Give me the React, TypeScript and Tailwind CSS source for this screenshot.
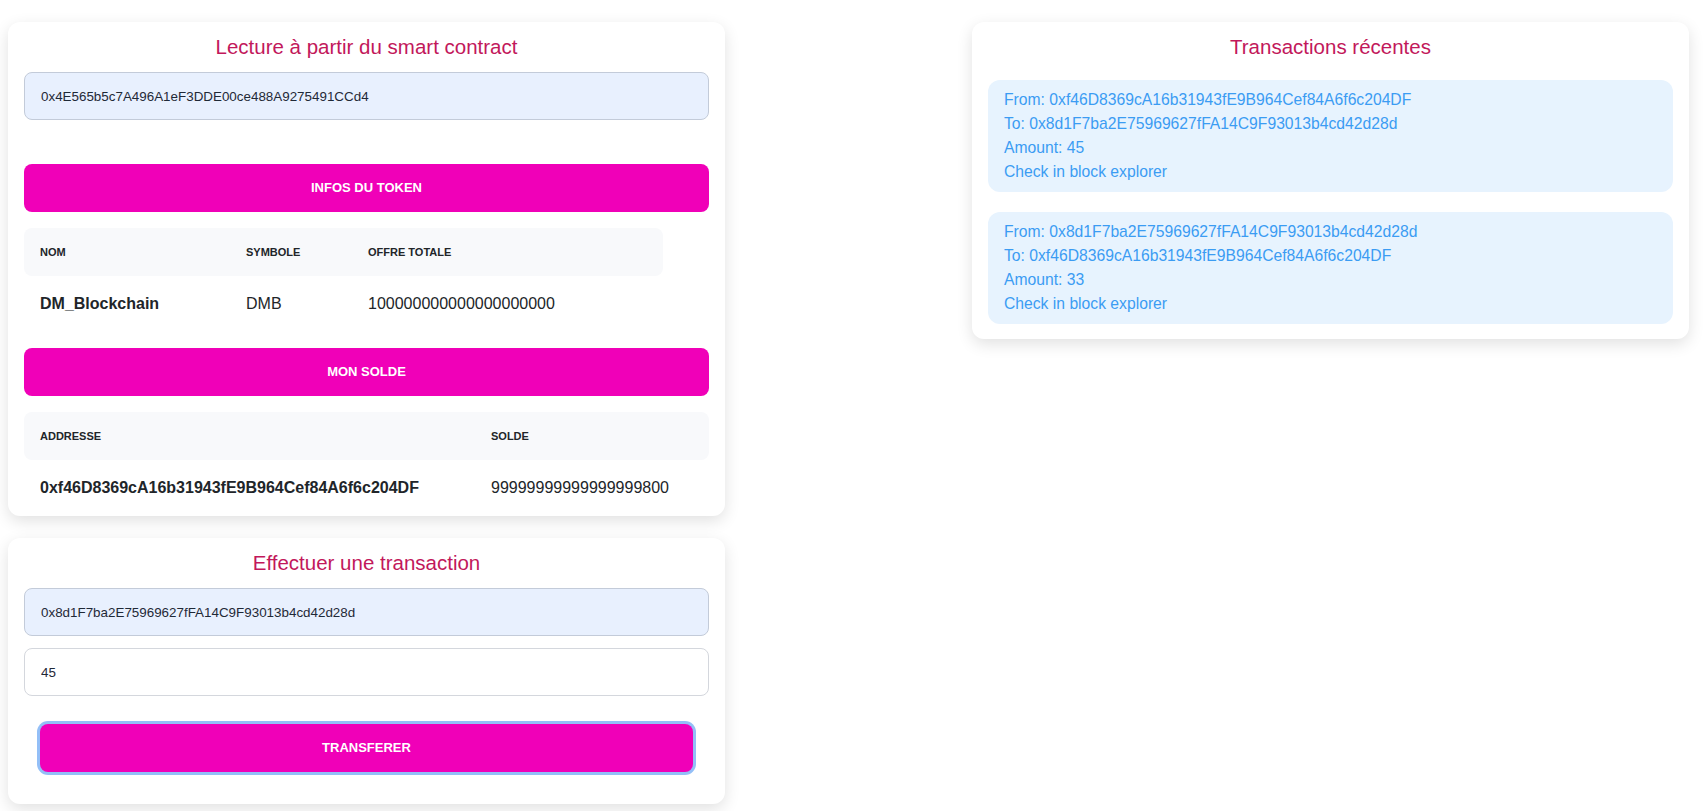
import { useState } from "react";

interface Transaction {
  from: string;
  to: string;
  amount: number;
}

const ADDR_CONTRACT = "0x4E565b5c7A496A1eF3DDE00ce488A9275491CCd4";
const ADDR_ME = "0xf46D8369cA16b31943fE9B964Cef84A6f6c204DF";
const ADDR_OTHER = "0x8d1F7ba2E75969627fFA14C9F93013b4cd42d28d";

const transactions: Transaction[] = [
  { from: ADDR_ME, to: ADDR_OTHER, amount: 45 },
  { from: ADDR_OTHER, to: ADDR_ME, amount: 33 },
];

const Title = ({ children }: { children: string }) => (
  <h2 className="text-center text-[20.5px] leading-[28px] text-[#c2185b] mb-[11px]">{children}</h2>
);

const PinkButton = ({ label, ring }: { label: string; ring?: boolean }) => (
  <button
    className={
      ring
        ? "w-full h-[48px] rounded-lg bg-[#f000b8] text-white text-[13px] font-bold uppercase ring-[3px] ring-[#93bff7]"
        : "w-full h-[48px] rounded-lg bg-[#f000b8] text-white text-[13px] font-bold uppercase"
    }
  >
    {label}
  </button>
);

const App = () => {
  const [contract, setContract] = useState(ADDR_CONTRACT);
  const [recipient, setRecipient] = useState(ADDR_OTHER);
  const [amount, setAmount] = useState("45");

  return (
    <div className="min-h-screen bg-white font-['Liberation_Sans',Arial,sans-serif] text-[#212529] flex justify-between items-start pl-[8px] pr-[19px] pt-[22px]">
      {/* colonne gauche */}
      <div className="w-[717px] flex flex-col gap-[22px]">
        <div className="bg-white rounded-xl shadow-[0_5px_16px_rgba(0,0,0,0.12)] px-4 pt-[11px]">
          <Title>Lecture à partir du smart contract</Title>
          <input
            value={contract}
            onChange={(e) => setContract(e.target.value)}
            className="w-full h-[48px] rounded-lg border border-[#c3cbd9] bg-[#e8f0fe] px-4 text-[13.4px] text-[#1f2937] outline-none"
          />
          <div className="mt-[44px]">
            <PinkButton label="Infos du token" />
          </div>
          <table className="mt-4 w-[639px] table-fixed text-left">
            <thead>
              <tr className="h-[48px] text-[11px] font-bold uppercase">
                <th className="w-[206px] bg-[#f8f9fb] rounded-l-lg pl-4">Nom</th>
                <th className="w-[122px] bg-[#f8f9fb] pl-4">Symbole</th>
                <th className="bg-[#f8f9fb] rounded-r-lg pl-4">Offre totale</th>
              </tr>
            </thead>
            <tbody>
              <tr className="h-[56px] text-[16px]">
                <td className="pl-4 font-bold">DM_Blockchain</td>
                <td className="pl-4">DMB</td>
                <td className="pl-4">100000000000000000000</td>
              </tr>
            </tbody>
          </table>
          <div className="mt-4">
            <PinkButton label="Mon solde" />
          </div>
          <table className="mt-4 w-full table-fixed text-left">
            <thead>
              <tr className="h-[48px] text-[11px] font-bold uppercase">
                <th className="w-[451px] bg-[#f8f9fb] rounded-l-lg pl-4">Addresse</th>
                <th className="bg-[#f8f9fb] rounded-r-lg pl-4">Solde</th>
              </tr>
            </thead>
            <tbody>
              <tr className="h-[56px] text-[16px]">
                <td className="pl-4 font-bold">{ADDR_ME}</td>
                <td className="pl-4">99999999999999999800</td>
              </tr>
            </tbody>
          </table>
        </div>

        <div className="bg-white rounded-xl shadow-[0_5px_16px_rgba(0,0,0,0.12)] px-4 pt-[11px] pb-[32px]">
          <Title>Effectuer une transaction</Title>
          <div className="flex flex-col gap-3">
            <input
              value={recipient}
              onChange={(e) => setRecipient(e.target.value)}
              className="w-full h-[48px] rounded-lg border border-[#c3cbd9] bg-[#e8f0fe] px-4 text-[13.4px] text-[#1f2937] outline-none"
            />
            <input
              value={amount}
              onChange={(e) => setAmount(e.target.value)}
              className="w-full h-[48px] rounded-lg border border-[#d4d7dd] bg-white px-4 text-[13.4px] text-[#1f2937] outline-none"
            />
          </div>
          <div className="mt-[28px] px-4">
            <PinkButton label="Transferer" ring />
          </div>
        </div>
      </div>

      {/* colonne droite */}
      <div className="w-[717px] bg-white rounded-xl shadow-[0_5px_16px_rgba(0,0,0,0.12)] px-4 pt-[11px] pb-[15px]">
        <Title>Transactions récentes</Title>
        <div className="mt-[19px] flex flex-col gap-5">
          {transactions.map((tx, i) => (
            <div key={i} className="rounded-xl bg-[#e7f3fe] px-4 py-2 text-[15.7px] leading-6 text-[#3b9cf3]">
              <div>From: {tx.from}</div>
              <div>To: {tx.to}</div>
              <div>Amount: {tx.amount}</div>
              <a href="#" className="block">Check in block explorer</a>
            </div>
          ))}
        </div>
      </div>
    </div>
  );
};

export default App;
